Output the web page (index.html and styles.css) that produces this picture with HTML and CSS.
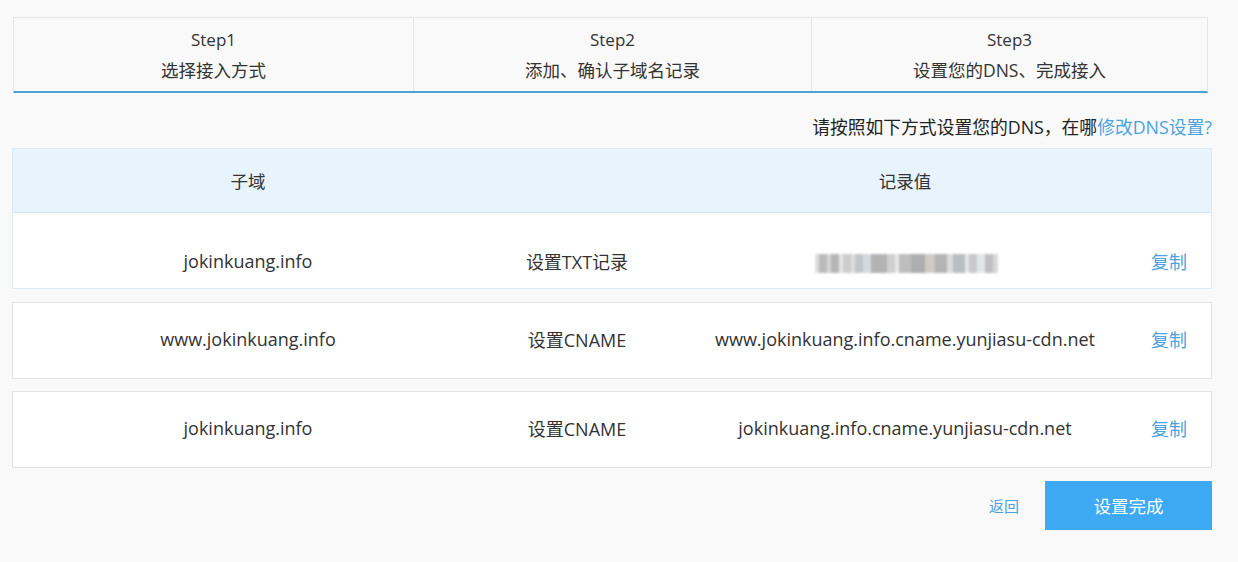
FILE: index.html
```html
<!DOCTYPE html>
<html lang="zh-CN">
<head>
<meta charset="utf-8">
<title>设置DNS</title>
<link rel="stylesheet" href="styles.css">
</head>
<body>
<div class="page">
  <div class="steps">
    <div class="step"><div class="step-num">Step1</div><div class="step-name">选择接入方式</div></div>
    <div class="step"><div class="step-num">Step2</div><div class="step-name">添加、确认子域名记录</div></div>
    <div class="step"><div class="step-num">Step3</div><div class="step-name">设置您的DNS、完成接入</div></div>
  </div>

  <div class="notice">请按照如下方式设置您的DNS，在哪<a class="link" href="#">修改DNS设置?</a></div>

  <div class="table">
    <div class="thead">
      <div class="cell">子域</div>
      <div class="cell"></div>
      <div class="cell">记录值</div>
      <div class="cell"></div>
    </div>
    <div class="row first">
      <div class="cell">jokinkuang.info</div>
      <div class="cell">设置TXT记录</div>
      <div class="cell"><span class="blurred"></span></div>
      <div class="cell"><a class="link" href="#">复制</a></div>
    </div>
  </div>

  <div class="row card">
    <div class="cell">www.jokinkuang.info</div>
    <div class="cell">设置CNAME</div>
    <div class="cell">www.jokinkuang.info.cname.yunjiasu-cdn.net</div>
    <div class="cell"><a class="link" href="#">复制</a></div>
  </div>

  <div class="row card">
    <div class="cell">jokinkuang.info</div>
    <div class="cell">设置CNAME</div>
    <div class="cell">jokinkuang.info.cname.yunjiasu-cdn.net</div>
    <div class="cell"><a class="link" href="#">复制</a></div>
  </div>

  <div class="actions">
    <a class="back" href="#">返回</a>
    <button class="done" type="button">设置完成</button>
  </div>
</div>
</body>
</html>
```

FILE: styles.css
```css
html, body {
  margin: 0;
  padding: 0;
  background: #f9f9f9;
}
body {
  font-family: "Open Sans", "Noto Sans CJK SC", sans-serif;
  color: #333;
}
.page {
  padding: 17px 26px 0 12px;
  width: 1200px;
}
.steps {
  margin-left: 1px;
  width: 1195px;
  display: grid;
  grid-template-columns: 399px 398px 1fr;
  border: 1px solid #e6e6e6;
  border-bottom: 2px solid #4fa3d4;
  box-sizing: border-box;
  height: 76px;
}
.step {
  text-align: center;
  border-left: 1px solid #e6e6e6;
  padding-top: 7px;
  font-size: 17px;
  line-height: 30px;
}
.step-name {
  font-size: 17.5px;
}
.step:first-child {
  border-left: none;
}
.notice {
  text-align: right;
  font-size: 17.8px;
  line-height: 24px;
  margin-top: 22px;
  margin-bottom: 9px;
  color: #222;
}
.link {
  color: #4aa3e0;
  text-decoration: none;
}
.table {
  border: 1px solid #dfe9f2;
  background: #fff;
}
.thead, .row {
  display: grid;
  grid-template-columns: 470px 188px 468px 60px;
  align-items: center;
}
.cell {
  text-align: center;
  white-space: nowrap;
}
.thead {
  background: #e8f4fd;
  height: 63px;
  border-bottom: 1px solid #d9e7f3;
  font-size: 17.5px;
}
.row {
  font-size: 18px;
}
.row.first {
  height: 75px;
  padding-top: 21px;
  box-sizing: border-box;
}
.card {
  background: #fff;
  border: 1px solid #e3e3e3;
  height: 72px;
  padding-bottom: 3px;
  margin-top: 13px;
}
.card + .card {
  margin-top: 12px;
}
.blurred {
  display: inline-block;
  vertical-align: middle;
  width: 183px;
  height: 19px;
  margin-left: 2px;
  background:
    linear-gradient(90deg,
      #d8d8d8 0 4px, #b0b0b0 4px 12px, #cfcfcf 12px 16px, #a9a9a9 16px 24px,
      #e0e0e0 24px 28px, #c4c4c4 28px 36px, #d9d9d9 36px 40px, #b8bcc2 40px 48px,
      #cdd4dc 48px 56px, #a6a6a6 56px 72px, #c8c8c8 72px 80px, #e4e4e4 80px 84px,
      #b3b3b3 84px 96px, #a0a0a0 96px 110px, #c7c2bc 110px 120px, #a7a7a7 120px 132px,
      #d6d6d6 132px 138px, #aeb2b8 138px 150px, #e3e3e3 150px 154px, #c0c0c0 154px 162px,
      #dde2e8 162px 170px, #b5b5b5 170px 178px, #d2d2d2 178px 183px);
  filter: blur(1.2px);
  opacity: 0.85;
}
.actions {
  display: flex;
  justify-content: flex-end;
  align-items: center;
  margin-top: 13px;
}
.back {
  font-size: 15px;
  color: #4aa3e0;
  text-decoration: none;
  margin-right: 26px;
}
.done {
  width: 167px;
  height: 49px;
  background: #3ea9f5;
  color: #fff;
  border: none;
  font-family: "Open Sans", "Noto Sans CJK SC", sans-serif;
  font-size: 17.5px;
  padding: 0;
}
```
